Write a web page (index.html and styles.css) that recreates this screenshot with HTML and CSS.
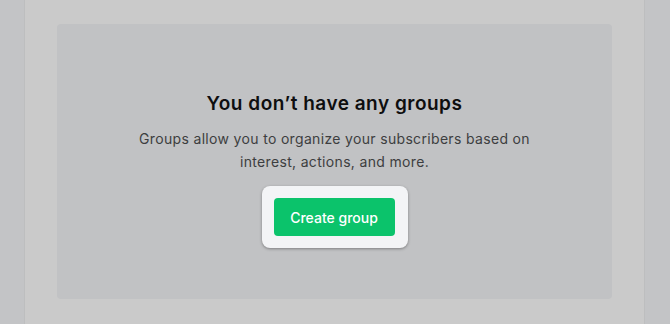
FILE: index.html
```html
<!DOCTYPE html>
<html>
<head>
<meta charset="utf-8">
<link rel="stylesheet" href="styles.css">
</head>
<body>
<div class="layout">
  <div class="side"></div>
  <main class="card">
    <section class="empty">
      <h2 class="title">You don’t have any groups</h2>
      <p class="desc">Groups allow you to organize your subscribers based on<br>interest, actions, and more.</p>
      <div class="spotlight">
        <button class="btn">Create group</button>
      </div>
    </section>
  </main>
  <div class="side side-right"></div>
</div>
</body>
</html>
```

FILE: styles.css
```css
html, body {
  margin: 0;
  padding: 0;
  background: #c3c4c6;
  font-family: Inter, "Noto Sans", sans-serif;
}
.layout {
  display: flex;
  width: 670px;
  height: 324px;
  overflow: hidden;
}
.side {
  width: 24px;
  flex: none;
  background: #c3c4c6;
  border-right: 1px solid #bdbebf;
}
.side-right {
  border-right: none;
  border-left: 1px solid #bdbebf;
}
.card {
  width: 619px;
  flex: none;
  background: #cacaca;
  padding: 24px 32px 0 32px;
  box-sizing: border-box;
}
.empty {
  background: #c1c2c4;
  border-radius: 4px;
  height: 275px;
  box-sizing: border-box;
  padding-top: 66px;
  display: flex;
  flex-direction: column;
  align-items: center;
  text-align: center;
}
.title {
  margin: 0;
  font-size: 19px;
  line-height: 28px;
  font-weight: 600;
  letter-spacing: 0.5px;
  color: #0e0e0f;
}
.desc {
  margin: 10px 0 0;
  font-size: 14px;
  line-height: 22.5px;
  letter-spacing: 0.33px;
  color: #3d3e40;
}
.spotlight {
  margin-top: 13px;
  padding: 12px 13px 12px 12px;
  background: #f3f4f6;
  border-radius: 8px;
  box-shadow: 0 1px 3px rgba(0,0,0,0.35);
}
.btn {
  display: block;
  border: none;
  border-radius: 4px;
  background: #0bc36b;
  color: #fff;
  font-family: Inter, "Noto Sans", sans-serif;
  font-size: 14px;
  font-weight: 500;
  height: 38px;
  width: 121px;
  padding: 0;
}
```
